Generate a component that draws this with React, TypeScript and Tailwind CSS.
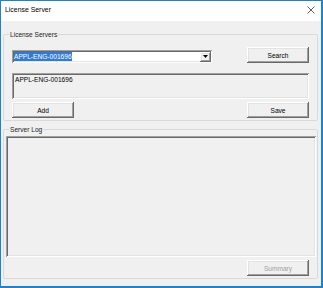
import React from "react";

const raised =
  "shadow-[inset_-1px_-1px_0_#696969,inset_1px_1px_0_#ffffff,inset_-2px_-2px_0_#a0a0a0,inset_2px_2px_0_#e3e3e3] bg-[#f0f0f0]";
const sunken =
  "shadow-[inset_1px_1px_0_#a0a0a0,inset_-1px_-1px_0_#ffffff,inset_2px_2px_0_#696969,inset_-2px_-2px_0_#e3e3e3]";

function Btn({ label, disabled }: { label: string; disabled?: boolean }) {
  return (
    <div
      className={`w-[62px] h-[16px] flex items-center justify-center text-[6.6px] leading-[9px] ${raised} ${
        disabled ? "text-[#a0a0a0]" : "text-black"
      }`}
    >
      {label}
    </div>
  );
}

export default function App() {
  return (
    <div
      className="w-[323px] h-[288px] border-t border-l border-r-2 border-b-2 border-[#1883d7] bg-[#f0f0f0] flex flex-col overflow-hidden text-black text-[6.6px] leading-[9px]"
      style={{ fontFamily: '"Liberation Sans", Arial, sans-serif' }}
    >
      {/* Title bar */}
      <div className="h-[20px] bg-white flex items-center justify-between pl-[4px] pr-[6px] shrink-0">
        <span className="text-[6.9px] leading-[10px] mt-[-2px]">License Server</span>
        <svg width="8" height="8" viewBox="0 0 8 8" className="mt-[-2px]">
          <path d="M0.5 0.5 L7.5 7.5 M7.5 0.5 L0.5 7.5" stroke="#333" strokeWidth="0.8" />
        </svg>
      </div>

      {/* Client */}
      <div className="flex-1 flex flex-col pl-[2px] pr-[3px]">
        <fieldset className="mt-[9px] border border-[#d9d9d9] rounded-[2px] pb-[2px]">
          <legend className="ml-[5px] px-[1px] text-[6.6px] leading-[9px] text-[#222]">License Servers</legend>
          <div className="flex items-start pl-[8px] pr-[8px] mt-[8px]">
            <div
              className={`mt-[3px] w-[200px] h-[13px] bg-white flex items-center pl-[2px] pr-[1px] ${sunken}`}
            >
              <span className="bg-[#2f7bd6] text-white text-[6.6px] leading-[9px]">APPL-ENG-001696</span>
              <div className={`ml-auto w-[11px] h-[10px] flex items-center justify-center ${raised}`}>
                <svg width="5" height="3" viewBox="0 0 5 3">
                  <path d="M0 0 H5 L2.5 3 Z" fill="#000" />
                </svg>
              </div>
            </div>
            <div className="ml-auto">
              <Btn label="Search" />
            </div>
          </div>
          <div className={`mx-[8px] mt-[10px] h-[26px] pl-[3px] pt-[2px] text-[6.6px] leading-[9px] ${sunken}`}>
            APPL-ENG-001696
          </div>
          <div className="flex justify-between mx-[8px] mt-[3px]">
            <Btn label="Add" />
            <Btn label="Save" />
          </div>
        </fieldset>

        <fieldset className="mt-[4px] border border-[#d9d9d9] rounded-[2px] pb-[2px] flex-none">
          <legend className="ml-[5px] px-[1px] text-[6.6px] leading-[9px] text-[#222]">Server Log</legend>
          <div className={`ml-[2px] mr-[1px] mt-[2px] h-[121px] ${sunken}`} />
          <div className="flex justify-end mr-[8px] mt-[3px]">
            <Btn label="Summary" disabled />
          </div>
        </fieldset>
      </div>
    </div>
  );
}
